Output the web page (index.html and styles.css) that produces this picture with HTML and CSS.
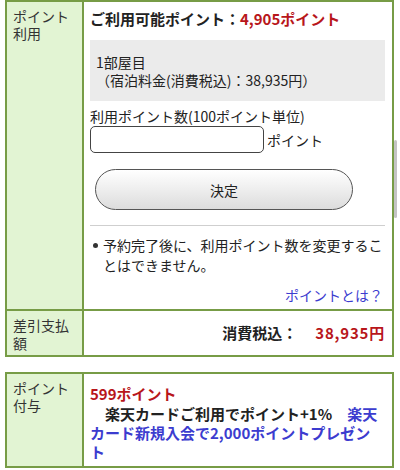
FILE: index.html
```html
<!DOCTYPE html>
<html lang="ja">
<head>
    <meta charset="UTF-8">
    <meta name="viewport" content="width=device-width, initial-scale=1.0">
    <title>ポイント利用</title>
    <link rel="stylesheet" href="styles.css">
</head>
<body>
    <div class="page">
        <table class="tbl first">
            <tr class="prev">
                <th></th>
                <td></td>
            </tr>
            <tr>
                <th>ポイント利用</th>
                <td class="use">
                    <p class="avail">ご利用可能ポイント：<span class="red">4,905ポイント</span></p>
                    <div class="room">
                        <p>1部屋目</p>
                        <p>（宿泊料金(消費税込)：38,935円）</p>
                    </div>
                    <p class="label">利用ポイント数(100ポイント単位)</p>
                    <div class="inputrow">
                        <input type="text" class="pt">
                        <span>ポイント</span>
                    </div>
                    <button class="decide">決定</button>
                    <ul class="notes">
                        <li>予約完了後に、利用ポイント数を変更することはできません。</li>
                    </ul>
                    <p class="what"><a href="#">ポイントとは？</a></p>
                </td>
            </tr>
            <tr>
                <th class="short">差引支払額</th>
                <td class="total">消費税込：<span class="red">38,935円</span></td>
            </tr>
        </table>

        <table class="tbl second">
            <tr>
                <th>ポイント付与</th>
                <td class="give">
                    <p class="red">599ポイント</p>
                    <p class="card">　楽天カードご利用でポイント+1%　<a href="#">楽天カード新規入会で2,000ポイントプレゼント</a></p>
                </td>
            </tr>
        </table>
    </div>
    <div class="scroll"></div>
</body>
</html>
```

FILE: styles.css
```css
body{
    margin: 0;
    background: #fff;
    color: #222;
    font-family: "Noto Sans CJK JP", "Noto Sans", sans-serif;
    font-size: 14px;
}
p{
    margin: 0;
}
.page{
    padding: 0 6px 0 5px;
}
.tbl{
    width: 100%;
    border-collapse: collapse;
    border: 2px solid #779c46;
}
.tbl th,
.tbl td{
    border: 2px solid #779c46;
    vertical-align: top;
    text-align: left;
}
.tbl th{
    width: 63px;
    background: #e2f4d3;
    font-weight: normal;
    color: #333;
    padding: 6px 6px;
    line-height: 17px;
}
.tbl th.short{
    padding: 5px 6px 3px 6px;
    line-height: 18px;
}
.tbl td{
    padding: 7px 7px 4px 6px;
    line-height: 20px;
}
.tbl .prev th,
.tbl .prev td{
    padding: 0;
    height: 0;
    border-top: none;
}
.first{
    margin-top: -2px;
}
.red{
    color: #b8161b;
    font-weight: bold;
}
.avail{
    font-size: 15px;
    font-weight: bold;
    line-height: 20px;
}
.room{
    background: #ebebeb;
    margin-top: 11px;
    padding: 13px 6px 12px 6px;
    line-height: 18px;
}
.label{
    margin-top: 5px;
}
.inputrow{
    display: flex;
    align-items: center;
    gap: 3px;
}
.pt{
    width: 174px;
    height: 27px;
    box-sizing: border-box;
    border: 1px solid #444;
    border-radius: 5px;
    margin: 0;
}
.decide{
    display: block;
    width: 258px;
    height: 41px;
    margin: 16px 0 0 5px;
    border: 1px solid #555;
    border-radius: 21px;
    background: linear-gradient(#fff, #ececec 55%, #dcdcdc);
    font-family: inherit;
    font-size: 14px;
    color: #222;
}
.notes{
    margin: 15px 0 0 0;
    padding: 9px 0 0 13px;
    border-top: 1px solid #cfcfcf;
    list-style: none;
}
.notes li{
    position: relative;
}
.notes li::before{
    content: "";
    position: absolute;
    left: -10px;
    top: 8px;
    width: 5px;
    height: 5px;
    border-radius: 50%;
    background: #333;
}
.what{
    text-align: right;
    margin-top: 10px;
    padding-right: 2px;
}
a{
    color: #3c3ccf;
    text-decoration: none;
}
.tbl td.total{
    text-align: right;
    font-size: 15px;
    font-weight: bold;
    vertical-align: middle;
    padding: 0 7px 0 6px;
}
.total .red{
    margin-left: 18px;
    letter-spacing: 0.8px;
}
.second{
    margin-top: 15px;
}
.tbl td.give{
    padding-top: 10px;
    padding-bottom: 5px;
    line-height: 19px;
}
.give .red{
    font-size: 15px;
    line-height: 20px;
}
.card{
    font-size: 15px;
    font-weight: bold;
}
.scroll{
    position: absolute;
    left: 394px;
    top: 140px;
    width: 3px;
    height: 78px;
    border-radius: 2px;
    background: #c4c4c4;
}
```
